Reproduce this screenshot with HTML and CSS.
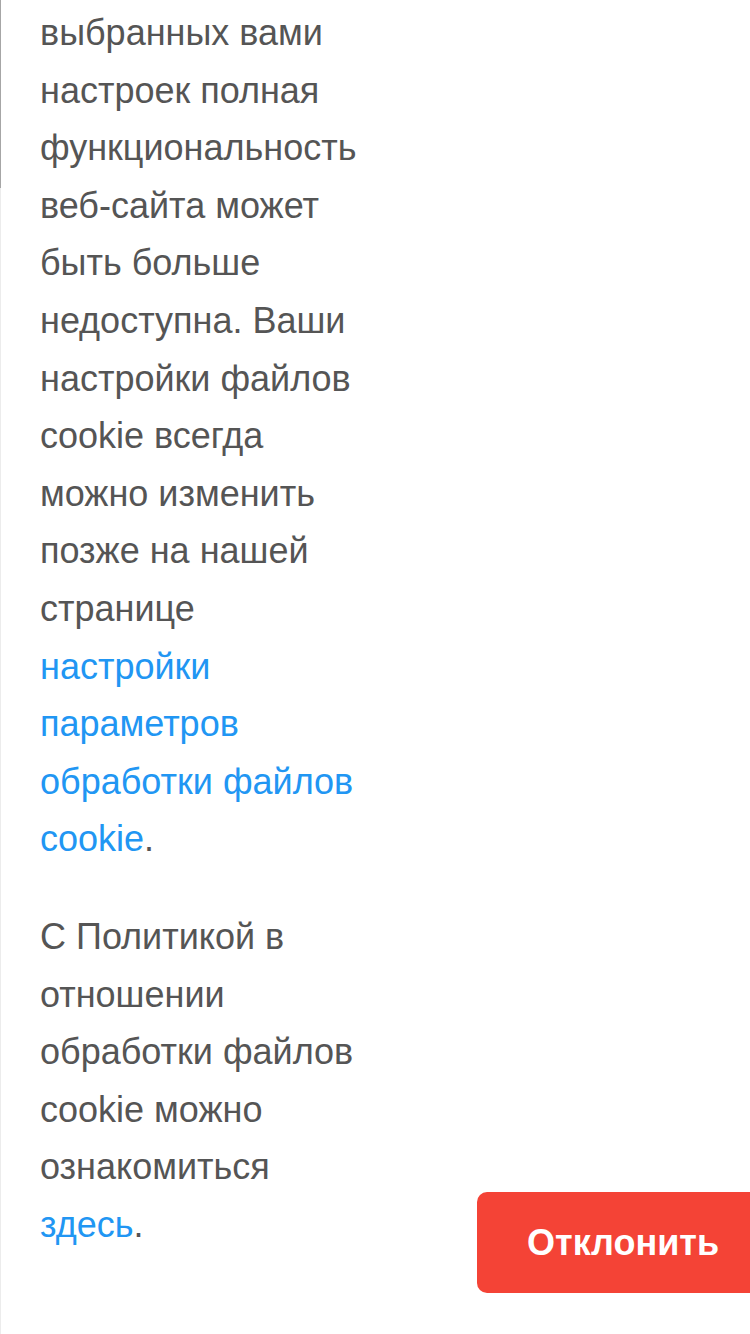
FILE: index.html
```html
<!DOCTYPE html>
<html lang="ru">
<head>
    <meta charset="UTF-8">
    <meta name="viewport" content="width=device-width, initial-scale=1.0">
    <title>Настройки cookie</title>
    <link rel="stylesheet" href="styles.css">
</head>
<body>
    <div class="panel">
        <div class="scroll-thumb"></div>
        <div class="content">
            <p>выбранных вами настроек полная функциональность веб-сайта может быть больше недоступна. Ваши настройки файлов cookie всегда можно изменить позже на нашей странице <a href="#">настройки параметров обработки файлов cookie</a>.</p>
            <p>С Политикой в отношении обработки файлов cookie можно ознакомиться <a href="#">здесь</a>.</p>
        </div>
        <div class="actions">
            <button class="decline">Отклонить</button>
        </div>
    </div>
</body>
</html>
```

FILE: styles.css
```css
html, body {
    margin: 0;
    padding: 0;
    background: #fff;
    overflow: hidden;
}
body {
    font-family: "Liberation Sans", Arial, sans-serif;
    height: 1334px;
}
.panel {
    position: relative;
    display: flex;
    align-items: flex-end;
    height: 1334px;
    box-sizing: border-box;
    border-left: 1px solid #ececec;
    padding-bottom: 41px;
}
.scroll-thumb {
    position: absolute;
    top: 0;
    left: -1px;
    width: 1px;
    height: 188px;
    background: #a6a6a6;
}
.content {
    align-self: flex-start;
    width: 322px;
    flex-shrink: 0;
    padding: 4px 0 0 39px;
}
.content p {
    margin: 0 0 40px;
    font-size: 36px;
    line-height: 57.6px;
    color: #555;
}
.content a {
    color: #2196f3;
    text-decoration: none;
}
.actions {
    flex: 1;
    display: flex;
    justify-content: flex-end;
    margin-right: -30px;
}
.decline {
    width: 303px;
    height: 101px;
    padding: 0 0 0 50px;
    text-align: left;
    background: #f44336;
    color: #fff;
    border: none;
    border-radius: 10px;
    font-family: "Liberation Sans", Arial, sans-serif;
    font-weight: bold;
    font-size: 36px;
    cursor: pointer;
}
```
